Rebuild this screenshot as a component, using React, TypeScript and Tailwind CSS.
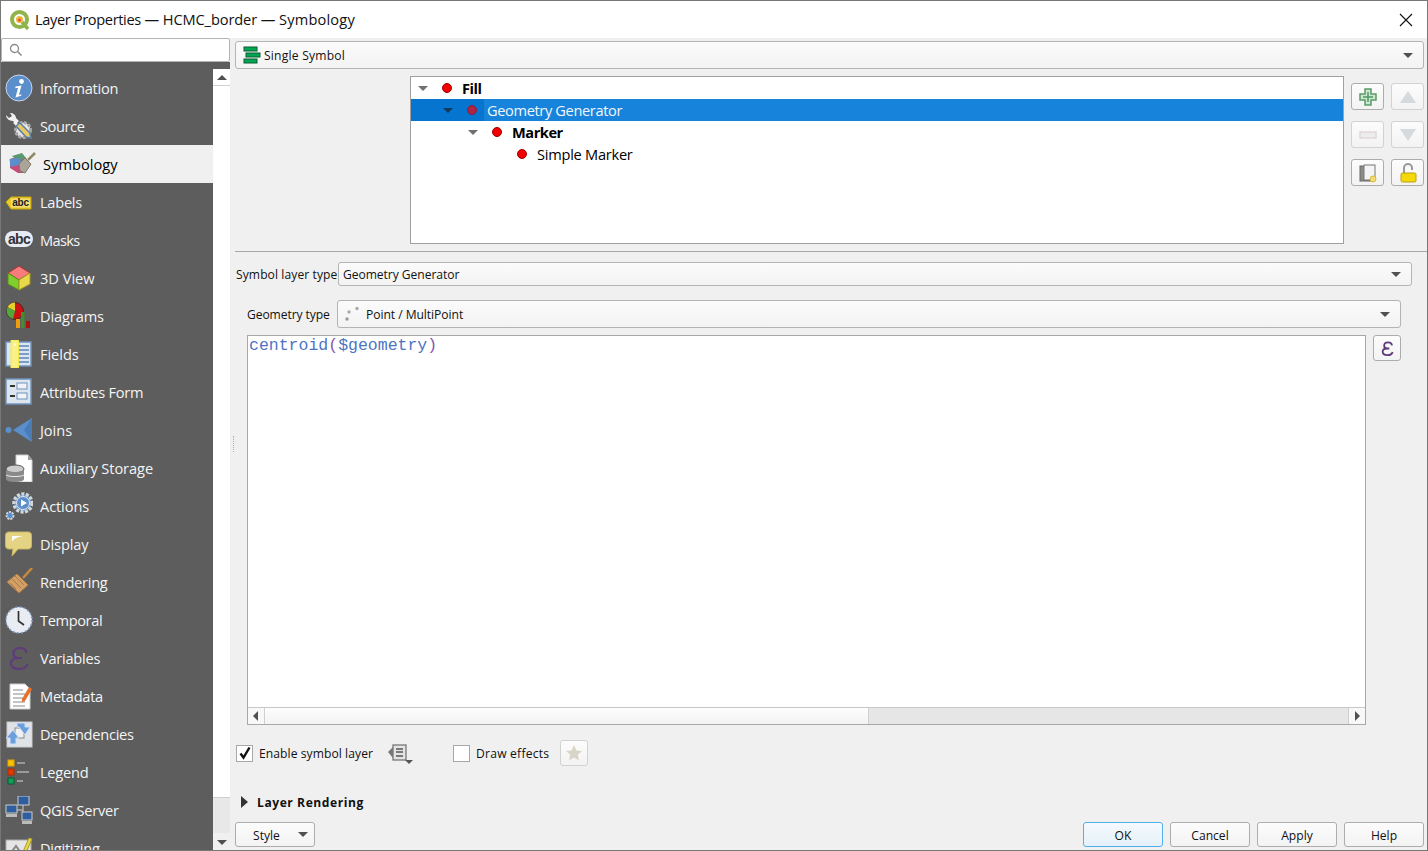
import React from "react";

const F = "font-['Open_Sans','Noto_Sans',sans-serif]";

const Svg = ({ children, s = 28 }: { children: React.ReactNode; s?: number }) => (
  <svg width={s} height={s} viewBox={`0 0 ${s} ${s}`} className="shrink-0">{children}</svg>
);

const Epsilon = ({ s = 28, w = 2.2 }: { s?: number; w?: number }) => (
  <svg width={s} height={s} viewBox="0 0 28 28" className="shrink-0">
    <path d="M21.500 9C21 5.500 18 4 15 4 10.500 4 8.500 6.500 8.500 9.500 8.500 12 10.500 14 13.500 14H17M13.500 14C9 14 6 16 6 19.500 6 23.500 10 25 14 25 18 25 21.500 23 22.500 20" fill="none" stroke="#5f3b7d" strokeWidth={w} />
  </svg>
);

const Info = () => <Svg><circle cx="14" cy="14" r="13" fill="#5b8fcb" stroke="#c5d5ea" strokeWidth="1" /><circle cx="16.500" cy="7.500" r="2.400" fill="#fff" /><path d="M10.500 12.500l6-1-2.600 9.500 2.600-.8-.4 1.600-5.600 1.700 2.600-9.700-2.800.4z" fill="#fff" /></Svg>;
const Source = () => <Svg><circle cx="18" cy="18" r="7.500" fill="#e6e6e6" stroke="#a8a8a8" strokeWidth="3" strokeDasharray="3 1.500" /><path d="M5 1c3 0 6 2 6 5l3 3-3 3-3-3C4 9 1 6 1 3l3 3 3-2z" fill="#f2f2f2" /><path d="M9 10l8 8" stroke="#f2f2f2" strokeWidth="2.500" /><path d="M15 11l-4 3 10 11 5 1-1-5z" fill="#e8c960" stroke="#5b7fa8" strokeWidth="1.500" /></Svg>;
const Symbology = () => <Svg><path d="M2 9l12-4 5 4-3 14-6 0-8-5z" fill="#c64c7a" /><path d="M4 6l10-3 4 5-8 3z" fill="#5a9a70" /><path d="M1.500 9l9-1 5 6-13 3z" fill="#5b8fcb" /><path d="M11 14l6-6 6 6-6 9-5-2z" fill="#aaa598" stroke="#7d7a6a" /><path d="M20 10l7-7" stroke="#8f8a64" strokeWidth="2.500" /></Svg>;
const Labels = () => <Svg><path d="M1 14l5-5h20v12H6z" fill="#e8c92a" stroke="#c9a90a" /><rect x="6" y="10.500" width="19" height="9" fill="#f2dc75" /><text x="15.500" y="18" fontSize="10" fontWeight="700" textAnchor="middle" fill="#222" fontFamily="Liberation Sans">abc</text></Svg>;
const Masks = () => <Svg><rect x="0" y="5" width="28" height="16" rx="8" fill="#e6ebf5" /><text x="14" y="18" fontSize="14" fontWeight="700" textAnchor="middle" fill="#333" fontFamily="Liberation Sans">abc</text></Svg>;
const View3D = () => <Svg><path d="M14 2l11 7-11 7L3 9z" fill="#f87c7c" stroke="#a33" /><path d="M3 9l11 7v10L3 20z" fill="#7fce2e" stroke="#5a8f1e" /><path d="M25 9l-11 7v10l11-6z" fill="#e9d84a" stroke="#a89a1e" /></Svg>;
const Diagrams = () => <Svg><circle cx="10" cy="9" r="8.500" fill="#c11" stroke="#333" /><path d="M10 9V.5A8.500 8.500 0 0 0 2.500 5z" fill="#e8d02a" /><path d="M10 9L2.500 5A8.500 8.500 0 0 0 8 17z" fill="#4fa83a" /><rect x="11" y="17" width="4" height="9" fill="#ee9c10" /><rect x="16" y="10" width="3.500" height="16" fill="#3f8f2c" /><rect x="21" y="19" width="4" height="7" fill="#a11" /></Svg>;
const Fields = () => <Svg><rect x="1" y="2" width="25" height="24" fill="#dbe6f3" stroke="#6f92bd" strokeWidth="1.500" /><path d="M14 6h10M14 10h10M14 14h10M14 18h10M14 22h10" stroke="#7d9dc5" strokeWidth="2" /><rect x="6" y="0" width="7.500" height="28" fill="#f9f185" stroke="#f3ea4a" /><circle cx="10" cy="4.500" r="1" fill="#fff" /></Svg>;
const AttrForm = () => <Svg><rect x="1" y="1" width="25" height="25" fill="#dde5ee" stroke="#6f92bd" strokeWidth="1.500" /><rect x="12" y="5" width="10" height="6" fill="#f0f4fa" stroke="#6f92bd" /><rect x="12" y="15" width="10" height="6" fill="#f0f4fa" stroke="#6f92bd" /><path d="M5 8h5M5 18h5" stroke="#333" strokeWidth="2" /></Svg>;
const Joins = () => <Svg><circle cx="3.500" cy="14" r="3" fill="#5b8fcb" /><path d="M27 2v24L8 14z" fill="#5b8fcb" /><path d="M27 2v24l-8-12z" fill="#4a7cb8" /></Svg>;
const Aux = () => <Svg><path d="M11 1h12l4 5v22H11z" fill="#fff" stroke="#ccc" /><path d="M23 1v5h4z" fill="#999" /><ellipse cx="10" cy="15" rx="9" ry="4" fill="#ccc" stroke="#555" /><path d="M1 15v10c0 2 4 3 9 3s9-1 9-3V15c0 2-4 3-9 3s-9-1-9-3z" fill="#8a8a8a" /><path d="M1 21c2 2 16 2 18 0" stroke="#eee" fill="none" /></Svg>;
const Actions = () => <Svg><circle cx="18" cy="11" r="9" fill="#5b8fcb" stroke="#d6d6d6" strokeWidth="3.500" strokeDasharray="3 1.500" /><circle cx="18" cy="11" r="6.500" fill="#5b8fcb" stroke="#e8e8e8" /><path d="M16 7.500l6 3.500-6 3.500z" fill="#fff" /><circle cx="5" cy="23.500" r="3.500" fill="#5b8fcb" stroke="#d6d6d6" strokeWidth="2" strokeDasharray="2 1" /></Svg>;
const Display = () => <Svg><path d="M4 2h19c2.500 0 3.500 1.500 3.500 3.500v10c0 2-1 3.500-3.500 3.500H13l-6 7 1-7H4c-2.500 0-3.500-1.500-3.500-3.500v-10C.5 3.500 1.500 2 4 2z" fill="#e3d382" stroke="#c9b860" /><path d="M7 6h11c-5 1-9 2-11 6z" fill="#fff" /></Svg>;
const Rendering = () => <Svg><path d="M18 10L27 0" stroke="#c78a3c" strokeWidth="2.500" /><path d="M12 6l11 11-9 8L2 14z" fill="#d2a066" stroke="#b07f45" /><path d="M7 11l9 9M10 8l9 9M5 15l6 6" stroke="#aa7a42" /></Svg>;
const Temporal = () => <Svg><circle cx="14" cy="14" r="13" fill="#e9edf3" stroke="#7fa0c8" strokeWidth="1.500" strokeDasharray="2 2.100" /><path d="M13.500 5v10l5.500 4" stroke="#333" strokeWidth="1.700" fill="none" /></Svg>;
const Metadata = () => <Svg><path d="M5 2h15l5 5v20H5z" fill="#fff" stroke="#ccc" /><path d="M8 8h10M8 12h12M8 16h10M8 20h12M8 24h12" stroke="#888" /><path d="M17 17l7-12 3 2-7 12-3 1z" fill="#e8702a" /></Svg>;
const Deps = () => <Svg><rect x="2" y="2" width="25" height="25" fill="#dfe3e8" stroke="#ccc" /><rect x="10" y="8" width="9" height="10" fill="#f0f0f0" stroke="#888" /><path d="M12 3h8v4h5l-5 8-6-8h-2z" fill="#6c9fdc" stroke="#cfe0f5" /><path d="M8 10l6 8h-3v6H5v-6H1z" fill="#6c9fdc" stroke="#cfe0f5" /></Svg>;
const Legend = () => <Svg><rect x="3" y="2" width="6" height="6" fill="#f5c400" stroke="#e8a000" /><rect x="3" y="11" width="6" height="6" fill="#e03a00" stroke="#b02a00" /><rect x="3" y="20" width="6" height="6" fill="#0f9d58" stroke="#0a5c33" /><path d="M12 5h8M12 14h12M12 23h6" stroke="#9a9a9a" strokeWidth="2" /></Svg>;
const Server = () => <Svg><path d="M18 8v10M6 14h12" stroke="#aaa" strokeWidth="1.500" fill="none" /><rect x="13" y="0" width="11" height="9" fill="#2e5e9e" stroke="#ccc" /><rect x="1" y="9" width="11" height="8" fill="#2e5e9e" stroke="#ccc" /><rect x="17" y="16" width="10" height="8" fill="#2e5e9e" stroke="#ccc" /><rect x="1" y="18" width="11" height="3" fill="#bbb" /><rect x="17" y="25" width="10" height="3" fill="#bbb" /></Svg>;
const Digit = () => <Svg><rect x="1" y="6" width="25" height="22" fill="#e5e5e5" stroke="#aaa" /><path d="M5 20l6-8 5 7" stroke="#888" fill="none" strokeWidth="2" /><path d="M17 20l7-16 3 1-7 16z" fill="#e8d84a" stroke="#a89a1e" /></Svg>;

const items: [string, React.ReactNode, string][] = [
  ["Information", <Info />, ""], ["Source", <Source />, "tracking-[-0.4px]"], ["Symbology", <Symbology />, "tracking-[0.05px]"], ["Labels", <Labels />, ""],
  ["Masks", <Masks />, "tracking-[-0.65px]"], ["3D View", <View3D />, "tracking-[0px]"], ["Diagrams", <Diagrams />, "tracking-[-0.12px]"], ["Fields", <Fields />, "tracking-[-0.05px]"],
  ["Attributes Form", <AttrForm />, ""], ["Joins", <Joins />, "tracking-[-0.05px]"], ["Auxiliary Storage", <Aux />, "tracking-[-0.07px]"], ["Actions", <Actions />, "tracking-[-0.1px]"],
  ["Display", <Display />, "tracking-[-0.1px]"], ["Rendering", <Rendering />, ""], ["Temporal", <Temporal />, "tracking-[-0.37px]"], ["Variables", <Epsilon />, ""],
  ["Metadata", <Metadata />, ""], ["Dependencies", <Deps />, ""], ["Legend", <Legend />, ""], ["QGIS Server", <Server />, ""], ["Digitizing", <Digit />, ""],
];

const NavRow = ({ label, icon, track }: { label: string; icon: React.ReactNode; track: string }) => {
  const active = label === "Symbology";
  return (
    <div className={"h-[38px] shrink-0 flex items-center text-[14.6px] " + (track || "tracking-[-0.25px]") + " " + (active ? "bg-[#f0f0f0] text-black pl-[6px]" : "text-[#f4f4f4] pl-[3px]")}>
      <div className="w-[30px] h-[30px] flex items-center justify-center shrink-0">{icon}</div>
      <span className="ml-[6px] pt-[2px]">{label}</span>
    </div>
  );
};

const Caret = ({ cls = "border-t-[#505050]" }: { cls?: string }) => (
  <span className={"block shrink-0 w-0 h-0 border-x-[5px] border-x-transparent border-t-[5px] " + cls} />
);

const Combo = ({ children, cls }: { children: React.ReactNode; cls: string }) => (
  <div className={"flex items-center bg-gradient-to-b from-[#fbfbfb] to-[#f3f3f3] border border-[#b4b4b4] rounded-[3px] text-[12.1px] text-[#111] pr-[10px] " + cls}>
    <div className="flex-1 flex items-center min-w-0">{children}</div>
    <Caret />
  </div>
);

const Dot = ({ selected }: { selected?: boolean }) => (
  <span className={"block w-[10px] h-[10px] rounded-full border shrink-0 " + (selected ? "bg-[#ad2346] border-[#8b1b3a]" : "bg-[#f00000] border-[#a00000]")} />
);

const TreeRow = ({ indent, label, bold, selected }: { indent: number; label: string; bold?: boolean; selected?: boolean }) => (
  <div className={"h-[22px] flex items-center text-[14.6px] relative " + (selected ? "bg-[#1883da] text-[#f2f7fc] tracking-[-0.36px]" : "text-black ") + (bold ? " font-bold tracking-[-0.45px]" : selected ? "" : " tracking-[-0.25px]")} style={{ paddingLeft: indent }}>
    {selected && <span className="absolute left-0 top-0 bottom-0 w-[73px] bg-[#0675d0]" />}
    {label !== "Simple Marker" && <span className="relative mr-[14px] flex"><Caret cls={selected ? "border-t-[#143a5c]" : "border-t-[#707070]"} /></span>}
    {label === "Simple Marker" && <span className="w-[24px]" />}
    <span className="relative flex items-center">
      <Dot selected={selected} />
      <span className="ml-[10px] pt-[2px]">{label}</span>
    </span>
  </div>
);

const ToolBtn = ({ children, dim }: { children: React.ReactNode; dim?: boolean }) => (
  <div className={"w-[33px] h-[27px] rounded-[3px] border flex items-center justify-center bg-gradient-to-b from-[#fcfcfc] to-[#f3f3f3] " + (dim ? "border-[#d2d2d2]" : "border-[#adadad]")}>{children}</div>
);

const FootBtn = ({ label, primary }: { label: string; primary?: boolean }) => (
  <div className={"w-[80px] h-[25px] pt-[4px] rounded-[3px] border flex items-center justify-center text-[12.1px] text-[#111] bg-gradient-to-b " + (primary ? "border-[#52b0ee] from-[#f5fafe] to-[#e4f0f8]" : "border-[#adadad] from-[#fcfcfc] to-[#f3f3f3]")}>{label}</div>
);

const ScrollArrow = ({ d }: { d: string }) => (
  <svg width="16" height="16" viewBox="0 0 16 16"><path d={d} fill="#505050" /></svg>
);

export default function App() {
  return (
    <div className={"w-[1428px] h-[851px] overflow-hidden bg-[#f0f0f0] border border-[#777] flex flex-col " + F}>
      {/* Title bar */}
      <div className="h-[37px] shrink-0 bg-white flex items-center text-[14.6px] text-[#111]">
        <svg width="22" height="22" viewBox="0 0 22 22" className="ml-[8px] mr-[4px]">
          <circle cx="10.500" cy="10.500" r="7.500" fill="#fff" stroke="#8fb44a" strokeWidth="4" />
          <path d="M13 13l6 7" stroke="#8fb44a" strokeWidth="3.500" />
          <circle cx="10.500" cy="10.500" r="3.500" fill="#f2b33d" />
          <circle cx="10.500" cy="11" r="1.500" fill="#e0533a" />
        </svg>
        <span className="flex-1 whitespace-pre"><span className="tracking-[-0.36px]">Layer Properties</span><span className="tracking-[-0.1px]"> — HCMC_border — </span><span className="tracking-[0.2px]">Symbology</span></span>
        <svg width="14" height="14" viewBox="0 0 14 14" className="mr-[14px]"><path d="M1 1l12 12M13 1L1 13" stroke="#111" strokeWidth="1.100" /></svg>
      </div>

      <div className="flex-1 flex min-h-0">
        {/* Sidebar */}
        <div className="w-[229px] shrink-0 flex flex-col min-h-0">
          <div className="h-[24px] shrink-0 bg-white border border-[#b4b4b4] rounded-[2px] flex items-center pl-[7px]">
            <svg width="14" height="14" viewBox="0 0 14 14"><circle cx="5.500" cy="5.500" r="4" fill="none" stroke="#8a8a8a" strokeWidth="1.300" /><path d="M8.500 8.500l4 4" stroke="#8a8a8a" strokeWidth="1.600" /></svg>
          </div>
          <div className="flex-1 min-h-0 bg-[#5d5d5d] pt-[7px] flex">
            <div className="w-[212px] flex flex-col overflow-hidden">
              {items.map(([l, i, t]) => <NavRow key={l} label={l} icon={i} track={t} />)}
            </div>
            <div className="w-[17px] bg-white flex flex-col">
              <div className="h-[17px] border-b border-[#d0d0d0] flex items-center justify-center"><ScrollArrow d="M3 11l5-5 5 5z" /></div>
              <div className="flex-1" />
              <div className="h-[36px] bg-[#e8e8e8] border-t border-[#cfcfcf]" />
              <div className="h-[17px] flex items-center justify-center bg-[#f0f0f0]"><ScrollArrow d="M3 6l5 5 5-5z" /></div>
            </div>
          </div>
        </div>

        {/* Splitter */}
        <div className="w-[5px] shrink-0 flex items-center pl-[3px]">
          <div className="h-[16px] w-px border-l border-dotted border-[#b0b0b0]" />
        </div>

        {/* Main */}
        <div className="flex-1 min-w-0 flex flex-col pr-[3px] pt-[3px]">
          <Combo cls="h-[28px] shrink-0">
            <svg width="18" height="18" viewBox="0 0 18 18" className="ml-[7px] mr-[3px]">
              <rect x="1" y="1" width="13" height="4" fill="#00a651" stroke="#0b5c33" />
              <rect x="3" y="7" width="14" height="4" fill="#00a651" stroke="#0b5c33" />
              <rect x="1" y="13" width="13" height="4" fill="#00a651" stroke="#0b5c33" />
            </svg>
            <span className="pt-[2px] tracking-[0.22px]">Single Symbol</span>
          </Combo>

          <div className="flex mt-[7px] shrink-0">
            <div className="ml-[175px] w-[934px] h-[168px] bg-white border border-[#a0a0a0]">
              <TreeRow indent={7} label="Fill" bold />
              <TreeRow indent={32} label="Geometry Generator" selected />
              <TreeRow indent={57} label="Marker" bold />
              <TreeRow indent={82} label="Simple Marker" />
            </div>
            <div className="ml-[7px] mt-[7px] grid grid-cols-[33px_33px] gap-x-[7px] gap-y-[11px] content-start">
              <ToolBtn><svg width="20" height="20" viewBox="0 0 20 20"><path d="M7 2h6v5h5v6h-5v5H7v-5H2V7h5z" fill="#cfe6d2" stroke="#5a9a68" strokeWidth="1.500" /><path d="M10 5v10M5 10h10" stroke="#4f9a60" strokeWidth="1.500" /></svg></ToolBtn>
              <ToolBtn dim><svg width="20" height="16" viewBox="0 0 20 16"><path d="M10 2l8 12H2z" fill="#d5dade" /></svg></ToolBtn>
              <ToolBtn dim><svg width="20" height="10" viewBox="0 0 20 10"><rect x="2" y="2" width="16" height="6" fill="#ececec" stroke="#e0d8d8" strokeWidth="1.500" /></svg></ToolBtn>
              <ToolBtn dim><svg width="20" height="16" viewBox="0 0 20 16"><path d="M2 2h16l-8 12z" fill="#d5dade" /></svg></ToolBtn>
              <ToolBtn><svg width="20" height="20" viewBox="0 0 20 20"><rect x="2" y="3" width="14" height="15" fill="#8c8c86" stroke="#666" /><rect x="6" y="2" width="11" height="15" fill="#f4f4f4" stroke="#777" /><circle cx="15" cy="16" r="3" fill="#f2dc75" stroke="#d9b93a" /></svg></ToolBtn>
              <ToolBtn><svg width="20" height="22" viewBox="0 0 20 22"><path d="M6 11V6a4 4 0 0 1 8 0v2" fill="none" stroke="#999" strokeWidth="2" /><rect x="3" y="11" width="15" height="9" rx="1.500" fill="#f5d80c" stroke="#b9a10a" /></svg></ToolBtn>
            </div>
          </div>

          <div className="h-px bg-[#a8a8a8] mt-[7px] mr-[-3px] shrink-0" />

          <div className="flex items-center mt-[10px] shrink-0 pr-[12px]">
            <span className="w-[103px] pl-px pt-[2px] text-[12.1px] text-[#111] whitespace-nowrap tracking-[0.08px]">Symbol layer type</span>
            <Combo cls="h-[24px] flex-1 pl-[4px]"><span className="pt-[2px] tracking-[-0.05px]">Geometry Generator</span></Combo>
          </div>

          <div className="flex items-center mt-[14px] shrink-0 pr-[23px] pl-[12px]">
            <span className="w-[90px] pt-[2px] text-[12.1px] text-[#111] tracking-[-0.08px]">Geometry type</span>
            <Combo cls="h-[28px] flex-1">
              <svg width="18" height="16" viewBox="0 0 18 16" className="ml-[7px] mr-[3px]"><circle cx="4" cy="6" r="1.700" fill="#aaa" /><circle cx="12" cy="2.500" r="1.700" fill="#aaa" /><circle cx="2" cy="13" r="1.700" fill="#999" /></svg>
              <span className="pt-[2px] tracking-[-0.05px]">Point / MultiPoint</span>
            </Combo>
          </div>

          <div className="flex mt-[7px] shrink-0 pl-[12px] pr-[23px]">
            <div className="w-[1119px] h-[390px] bg-white border border-[#a8a8a8] flex flex-col">
              <div className="flex-1 pl-px font-['Liberation_Mono',monospace] text-[16.5px] leading-[20px] text-[#4d74c4]">
                centroid<span className="text-[#8a55b0]">(</span><span className="text-[#4d74c4]">$geometry</span><span className="text-[#8a55b0]">)</span>
              </div>
              <div className="h-[17px] border-t border-[#c8c8c8] flex bg-[#e6e6e6]">
                <div className="w-[17px] bg-[#f8f8f8] border-r border-[#d0d0d0] flex items-center justify-center"><ScrollArrow d="M10 3L5 8l5 5z" /></div>
                <div className="w-[604px] bg-gradient-to-b from-[#fdfdfd] to-[#f3f3f3] border-r border-[#d0d0d0]" />
                <div className="flex-1" />
                <div className="w-[17px] bg-[#f8f8f8] border-l border-[#d0d0d0] flex items-center justify-center"><ScrollArrow d="M6 3l5 5-5 5z" /></div>
              </div>
            </div>
            <div className="ml-[7px] w-[28px] h-[26px] rounded-[3px] border border-[#adadad] bg-gradient-to-b from-[#fcfcfc] to-[#f3f3f3] flex items-center justify-center"><Epsilon s={17} w={3} /></div>
          </div>

          <div className="flex items-center mt-[15px] shrink-0 h-[26px] pl-px text-[12.1px] text-[#111]">
            <span className="w-[17px] h-[17px] bg-white border border-[#a8a8a8] flex items-center justify-center">
              <svg width="14" height="14" viewBox="0 0 14 14"><path d="M2.500 7.500l3 4L11.500 1.500" fill="none" stroke="#111" strokeWidth="2.400" /></svg>
            </span>
            <span className="ml-[6px] pt-[2px] tracking-[0.07px]">Enable symbol layer</span>
            <svg width="28" height="22" viewBox="0 0 28 22" className="ml-[14px]">
              <path d="M1 10l5-5v11z" fill="#777" /><rect x="6" y="3" width="13" height="15" fill="#e4e4e4" stroke="#777" strokeWidth="1.300" /><path d="M9 7h7M9 10h7M9 14h7" stroke="#555" strokeWidth="1.300" /><path d="M18 18h8l-4 4z" fill="#555" />
            </svg>
            <span className="ml-[38px] w-[17px] h-[17px] bg-white border border-[#a8a8a8]" />
            <span className="ml-[6px] pt-[2px] tracking-[0.22px]">Draw effects</span>
            <span className="ml-[11px] w-[28px] h-[26px] rounded-[3px] border border-[#d2d2d2] bg-gradient-to-b from-[#fcfcfc] to-[#f3f3f3] flex items-center justify-center">
              <svg width="18" height="18" viewBox="0 0 18 18"><path d="M9 1l2.400 5.400 5.600.6-4.200 3.800 1.200 5.700L9 13.600 4 16.500l1.200-5.700L1 7l5.600-.6z" fill="#d8d5c8" /></svg>
            </span>
          </div>

          <div className="flex items-center mt-[26px] shrink-0 h-[20px] pl-[5px]">
            <svg width="9" height="12" viewBox="0 0 9 12"><path d="M1 0l7 6-7 6z" fill="#333" /></svg>
            <span className="ml-[8px] pt-[2px] text-[12.1px] font-bold text-[#111] tracking-[0.55px]">Layer Rendering</span>
          </div>

          <div className="flex items-center mt-[10px] shrink-0 gap-[7px]">
            <div className="w-[80px] h-[25px] rounded-[3px] border border-[#adadad] bg-gradient-to-b from-[#fcfcfc] to-[#f3f3f3] flex items-center text-[12.1px] text-[#111]">
              <span className="ml-[17px] pt-[4px] flex-1">Style</span>
              <span className="mr-[6px] flex"><Caret /></span>
            </div>
            <div className="flex-1" />
            <FootBtn label="OK" primary />
            <FootBtn label="Cancel" />
            <FootBtn label="Apply" />
            <FootBtn label="Help" />
          </div>
        </div>
      </div>
    </div>
  );
}
